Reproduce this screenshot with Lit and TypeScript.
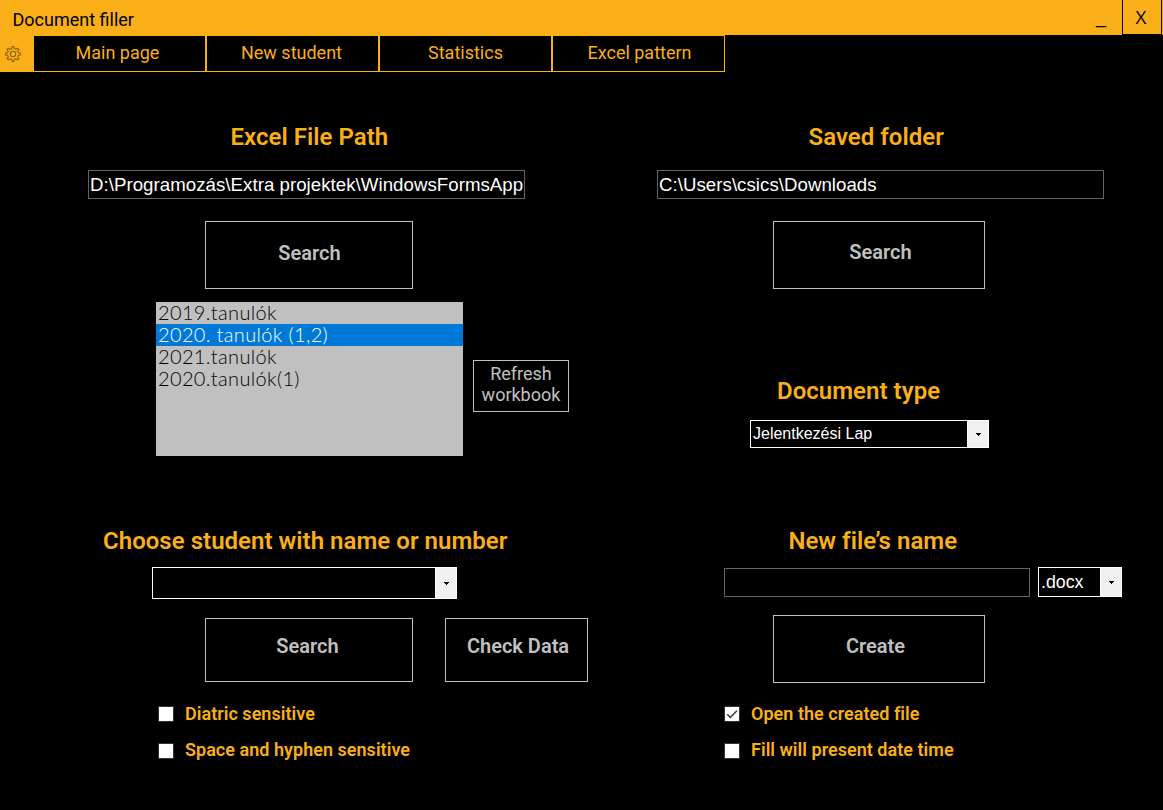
import { LitElement, html, css, svg, nothing } from "lit";
import { customElement, property } from "lit/decorators.js";
import { classMap } from "lit/directives/class-map.js";

@customElement("combo-box")
class ComboBox extends LitElement {
  @property() value = "";

  static styles = css`
    :host {
      display: flex;
      box-sizing: border-box;
      border: 1px solid #fff;
      background: #000;
      color: #fff;
      font: 16px/18px "Liberation Sans", Arial, sans-serif;
    }
    .value {
      flex: 1;
      min-width: 0;
      padding: 4px 0 0 2px;
      white-space: nowrap;
      overflow: hidden;
    }
    .drop {
      width: 20px;
      border-left: 1px solid #fff;
      background: #f0f0f0;
      display: flex;
      align-items: center;
      justify-content: center;
    }
  `;

  render() {
    return html`
      <div class="value">${this.value}</div>
      <div class="drop">
        <svg width="6" height="4" viewBox="0 0 6 4" shape-rendering="crispEdges">
          <path d="M1 1h5v1h-1v1h-1v1h-1v-1h-1v-1h-1z" fill="#000" />
        </svg>
      </div>
    `;
  }
}

@customElement("check-option")
class CheckOption extends LitElement {
  @property({ type: Boolean }) checked = false;
  @property() label = "";

  static styles = css`
    :host {
      display: flex;
      align-items: flex-start;
      height: 21px;
      font: 600 18px/21px Roboto, sans-serif;
      letter-spacing: 0.03px;
      color: #faaf19;
      white-space: nowrap;
    }
    .box {
      box-sizing: border-box;
      width: 16px;
      height: 16px;
      margin: var(--box-drop, 3px) 11px 0 0;
      border: 1px solid #333;
      background: #fff;
    }
    svg {
      display: block;
    }
  `;

  render() {
    return html`
      <div class="box">
        ${this.checked
          ? html`<svg width="14" height="14" viewBox="0 0 14 14">
              <path d="M2.3 7.2L5.3 10.4L11.9 3.7" fill="none" stroke="#333" stroke-width="1.4" />
            </svg>`
          : nothing}
      </div>
      <span>${this.label}</span>
    `;
  }
}

function gearPath(teeth: number, outer: number, inner: number): string {
  const points: string[] = [];
  const step = (Math.PI * 2) / teeth;
  const shape: [number, number][] = [
    [-0.3, inner],
    [-0.17, outer],
    [0.17, outer],
    [0.3, inner],
  ];
  for (let i = 0; i < teeth; i++) {
    for (const [offset, r] of shape) {
      const a = (i + offset) * step;
      points.push(`${(Math.sin(a) * r).toFixed(2)} ${(-Math.cos(a) * r).toFixed(2)}`);
    }
  }
  return `M${points.join("L")}Z`;
}

@customElement("app-root")
class AppRoot extends LitElement {
  private tabs = [
    { label: "Main page", cls: "main" },
    { label: "New student", cls: "student" },
    { label: "Statistics", cls: "stats" },
    { label: "Excel pattern", cls: "pattern" },
  ];
  private sheets = ["2019.tanulók", "2020. tanulók (1,2)", "2021.tanulók", "2020.tanulók(1)"];
  private selected = 1;

  static styles = css`
    :host {
      display: block;
      width: 1163px;
      height: 810px;
      overflow: hidden;
      background: #000;
      color: #faaf19;
      font: 18px/21px Roboto, sans-serif;
    }
    * {
      box-sizing: border-box;
    }
    .titlebar {
      display: flex;
      height: 35px;
      background: #faaf19;
      color: #000;
    }
    .title {
      flex: 1;
      padding: 9px 0 0 12.5px;
    }
    .min {
      width: 42px;
      padding: 7px 0 0 16px;
      font: 18px/20px "Liberation Sans", sans-serif;
    }
    .close {
      width: 40px;
      margin-right: 1px;
      border: 1px solid #000;
      border-top: 0;
      padding: 4px 2px 0 0;
      text-align: center;
      font: 18.7px/25px "Open Sans", sans-serif;
    }
    .nav {
      display: flex;
      height: 37px;
    }
    .gear {
      width: 33px;
      background: #faaf19;
      padding: 11px 0 0 5px;
    }
    .gear svg {
      display: block;
    }
    .tab {
      width: 173px;
      border: 1px solid #faaf19;
      text-align: center;
      padding-top: 6px;
    }
    .tab.main {
      padding-right: 4px;
    }
    .tab.student {
      padding-right: 2px;
    }
    .tab.pattern {
      padding-left: 2px;
    }
    .body {
      display: grid;
      grid-template-columns: 600px 563px;
    }
    .col {
      display: flex;
      flex-direction: column;
      align-items: flex-start;
      padding-top: 51px;
    }
    h2 {
      margin: 0;
      font: 600 24px/28px Roboto, sans-serif;
      letter-spacing: 0.03px;
      white-space: nowrap;
    }
    .h-excel {
      margin-left: 230.5px;
    }
    .h-student {
      margin: 71px 0 0 103px;
    }
    .h-saved {
      margin-left: 208.5px;
    }
    .h-type {
      margin: 88px 0 0 177px;
    }
    .h-name {
      margin: 79px 0 0 188.4px;
    }
    .text {
      height: 29px;
      border: 1px solid #646464;
      padding: 3px 0 0 1px;
      color: #fff;
      font: 18.667px/21px "Liberation Sans", Arial, sans-serif;
      letter-spacing: 0.04px;
      white-space: nowrap;
      overflow: hidden;
    }
    .t-excel {
      width: 437px;
      margin: 19px 0 0 88px;
    }
    .t-saved {
      width: 447px;
      margin: 19px 0 0 57px;
    }
    .t-name {
      width: 306px;
      margin-top: 1px;
    }
    .btn {
      border: 1px solid #c0c0c0;
      color: #c0c0c0;
      text-align: center;
      font: 600 20px/23px Roboto, sans-serif;
      white-space: nowrap;
    }
    .b-excel {
      width: 208px;
      height: 68px;
      margin: 22px 0 0 205px;
      padding: 20px 0 0 1px;
    }
    .b-saved {
      width: 212px;
      height: 68px;
      margin: 22px 0 0 173px;
      padding: 19px 0 0 3px;
    }
    .b-student {
      width: 208px;
      height: 64px;
      padding: 16px 3px 0 0;
    }
    .b-check {
      width: 143px;
      height: 64px;
      padding: 16px 0 0 3px;
    }
    .b-create {
      width: 212px;
      height: 68px;
      margin: 18px 0 0 173px;
      padding: 19px 7px 0 0;
    }
    .b-refresh {
      width: 96px;
      height: 52px;
      margin-top: 58px;
      padding-top: 2px;
      font: 18px/21px Roboto, sans-serif;
    }
    .books {
      display: flex;
      gap: 10px;
      margin: 13px 0 0 156px;
    }
    .list {
      width: 307px;
      height: 154px;
      background: #c0c0c0;
      color: #000;
      font: 300 20px/20px Lato, sans-serif;
      letter-spacing: 0.35px;
    }
    .item {
      height: 22px;
      padding-left: 2px;
    }
    .item.on {
      background: #0078d7;
      color: #fff;
    }
    .c-student {
      width: 305px;
      height: 32px;
      margin: 12px 0 0 152px;
    }
    .c-type {
      width: 239px;
      height: 28px;
      margin: 15px 0 0 150px;
    }
    .c-ext {
      width: 84px;
      height: 30px;
      font-size: 17.8px;
      line-height: 20px;
    }
    .actions {
      display: flex;
      gap: 32px;
      margin: 19px 0 0 205px;
    }
    .file {
      display: flex;
      align-items: flex-start;
      gap: 8px;
      margin: 12px 0 0 124px;
    }
    .checks {
      display: flex;
      flex-direction: column;
      gap: 15px;
    }
    .checks check-option:last-child {
      --box-drop: 4px;
    }
    .k-left {
      margin: 21px 0 0 158px;
    }
    .k-right {
      margin: 20px 0 0 124px;
    }
  `;

  render() {
    return html`
      <div class="titlebar">
        <div class="title">Document filler</div>
        <div class="min">_</div>
        <div class="close">X</div>
      </div>
      <div class="nav">
        <div class="gear">
          <svg width="16" height="16" viewBox="-8 -8 16 16" fill="none" stroke="#8d600b" stroke-width="1.1" stroke-linejoin="round">
            ${svg`<path d=${gearPath(8, 7.4, 5.5)} />`}
            <circle r="2.7" />
          </svg>
        </div>
        ${this.tabs.map((t) => html`<div class="tab ${t.cls}">${t.label}</div>`)}
      </div>
      <div class="body">
        <div class="col">
          <h2 class="h-excel">Excel File Path</h2>
          <div class="text t-excel">D:\\Programozás\\Extra projektek\\WindowsFormsApp</div>
          <div class="btn b-excel">Search</div>
          <div class="books">
            <div class="list">
              ${this.sheets.map(
                (s, i) => html`<div class=${classMap({ item: true, on: i === this.selected })}>${s}</div>`
              )}
            </div>
            <div class="btn b-refresh">Refresh<br />workbook</div>
          </div>
          <h2 class="h-student">Choose student with name or number</h2>
          <combo-box class="c-student"></combo-box>
          <div class="actions">
            <div class="btn b-student">Search</div>
            <div class="btn b-check">Check Data</div>
          </div>
          <div class="checks k-left">
            <check-option label="Diatric sensitive"></check-option>
            <check-option label="Space and hyphen sensitive"></check-option>
          </div>
        </div>
        <div class="col">
          <h2 class="h-saved">Saved folder</h2>
          <div class="text t-saved">C:\\Users\\csics\\Downloads</div>
          <div class="btn b-saved">Search</div>
          <h2 class="h-type">Document type</h2>
          <combo-box class="c-type" value="Jelentkezési Lap"></combo-box>
          <h2 class="h-name">New file’s name</h2>
          <div class="file">
            <div class="text t-name"></div>
            <combo-box class="c-ext" value=".docx"></combo-box>
          </div>
          <div class="btn b-create">Create</div>
          <div class="checks k-right">
            <check-option checked label="Open the created file"></check-option>
            <check-option label="Fill will present date time"></check-option>
          </div>
        </div>
      </div>
    `;
  }
}
